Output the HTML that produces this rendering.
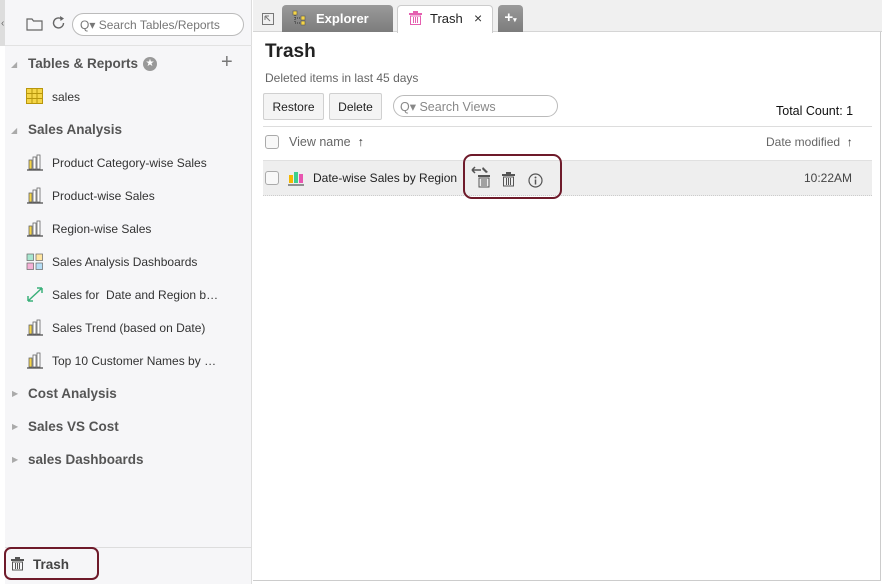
<!DOCTYPE html>
<html><head><meta charset="utf-8"><style>
*{box-sizing:border-box;margin:0;padding:0}
body{width:882px;height:584px;background:#fff;font-family:"Liberation Sans",Arial,sans-serif;position:relative;overflow:hidden;color:#333}
.a{position:absolute}
.side{left:5px;top:0;width:247px;height:584px;background:#f6f6f8;border-right:1px solid #ddd}
.t{font-size:12px;color:#333;white-space:nowrap}
.h{font-size:13.5px;font-weight:bold;color:#555;white-space:nowrap}
</style></head><body>
<div class="a" style="left:0;top:0;width:5px;height:46px;background:#ddd"></div>
<div class="a" style="left:1px;top:18px;font-size:10px;color:#666">‹</div>
<div class="a side"></div>
<div class="a" style="left:5px;top:45px;width:247px;height:1px;background:#e2e2e2"></div>
<svg class="a" style="left:26px;top:16px" width="18" height="16"><path d="M1 3h5l1.5 2H16v9H1z" fill="none" stroke="#666" stroke-width="1.2"/></svg>
<svg class="a" style="left:51px;top:15px" width="16" height="16"><path d="M12.5 8A5 5 0 1 1 10 3.6" fill="none" stroke="#666" stroke-width="1.4"/><path d="M9 1l4 2.5-3.5 2.5z" fill="#666"/></svg>
<div class="a" style="left:72px;top:13px;width:172px;height:23px;border:1px solid #bbb;border-radius:12px;background:#fff"></div>
<div class="a t" style="left:80px;top:18px;color:#777;font-size:12px">Q▾ Search Tables/Reports</div>
<div class="a" style="left:11px;top:60px;font-size:8px;color:#aaa">◢</div>
<div class="a h" style="left:28px;top:56px">Tables &amp; Reports</div>
<div class="a" style="left:143px;top:57px;width:14px;height:14px;border-radius:50%;background:#999;color:#fff;font-size:10px;line-height:14px;text-align:center">★</div>
<div class="a" style="left:221px;top:51px;font-size:20px;color:#777">+</div>
<svg class="a" style="left:26px;top:88px" width="17" height="16"><rect x=".5" y=".5" width="16" height="15" fill="#f5d547" stroke="#b8960c"/><path d="M6 0v16M11 0v16M0 5.5h17M0 10.5h17" stroke="#b8960c"/></svg>
<div class="a t" style="left:52px;top:90px">sales</div>
<div class="a" style="left:11px;top:126px;font-size:8px;color:#aaa">◢</div>
<div class="a h" style="left:28px;top:122px">Sales Analysis</div>
<svg width="0" height="0" style="position:absolute"><defs><g id="bar"><rect x="3" y="6" width="3" height="9" fill="#f5d547" stroke="#666" stroke-width=".8"/><rect x="7" y="3" width="3" height="12" fill="#fff" stroke="#666" stroke-width=".8"/><rect x="11" y="1" width="3" height="14" fill="#fff" stroke="#666" stroke-width=".8"/><path d="M1 16h16" stroke="#444" stroke-width="1.2"/></g></defs></svg>
<svg class="a" style="left:26px;top:154px" width="18" height="17"><use href="#bar"/></svg>
<div class="a t" style="left:52px;top:156px">Product Category-wise Sales</div>
<svg class="a" style="left:26px;top:187px" width="18" height="17"><use href="#bar"/></svg>
<div class="a t" style="left:52px;top:189px">Product-wise Sales</div>
<svg class="a" style="left:26px;top:220px" width="18" height="17"><use href="#bar"/></svg>
<div class="a t" style="left:52px;top:222px">Region-wise Sales</div>
<svg class="a" style="left:26px;top:253px" width="18" height="17"><rect x="1" y="1" width="6.5" height="6.5" fill="#a8e6cf" stroke="#666" stroke-width=".7"/><rect x="10" y="1" width="6.5" height="6.5" fill="#ffe5a0" stroke="#666" stroke-width=".7"/><rect x="1" y="10" width="6.5" height="6.5" fill="#f4b0d6" stroke="#666" stroke-width=".7"/><rect x="10" y="10" width="6.5" height="6.5" fill="#b5ddf5" stroke="#666" stroke-width=".7"/></svg>
<div class="a t" style="left:52px;top:255px">Sales Analysis Dashboards</div>
<svg class="a" style="left:26px;top:286px" width="18" height="17"><path d="M2 15L16 2M2 15v-5M2 15h5M16 2h-5M16 2v5" stroke="#3bb07a" stroke-width="1.5" fill="none"/></svg>
<div class="a t" style="left:52px;top:288px">Sales for &nbsp;Date and Region b…</div>
<svg class="a" style="left:26px;top:319px" width="18" height="17"><use href="#bar"/></svg>
<div class="a t" style="left:52px;top:321px">Sales Trend (based on Date)</div>
<svg class="a" style="left:26px;top:352px" width="18" height="17"><use href="#bar"/></svg>
<div class="a t" style="left:52px;top:354px">Top 10 Customer Names by …</div>
<div class="a" style="left:12px;top:389px;font-size:8px;color:#aaa">▶</div>
<div class="a h" style="left:28px;top:386px">Cost Analysis</div>
<div class="a" style="left:12px;top:422px;font-size:8px;color:#aaa">▶</div>
<div class="a h" style="left:28px;top:419px">Sales VS Cost</div>
<div class="a" style="left:12px;top:455px;font-size:8px;color:#aaa">▶</div>
<div class="a h" style="left:28px;top:452px">sales Dashboards</div>
<div class="a" style="left:5px;top:547px;width:247px;height:1px;background:#ddd"></div>
<div class="a" style="left:4px;top:547px;width:95px;height:33px;border:2px solid #6e1a2a;border-radius:7px"></div>
<svg class="a" style="left:11px;top:557px" width="13" height="14"><rect x="4" y="0" width="5" height="2" fill="#555"/><rect x="0" y="2" width="13" height="2" fill="#555"/><path d="M1.5 5h10v8h-10z M4.5 6v6M6.5 6v6M8.5 6v6" fill="none" stroke="#555"/></svg>
<div class="a h" style="left:33px;top:557px;color:#444">Trash</div>
<div class="a" style="left:253px;top:0;width:629px;height:32px;background:#f0f0f0;border-bottom:1px solid #d5d5d5"></div>
<svg class="a" style="left:262px;top:13px" width="12" height="12"><rect x=".5" y=".5" width="11" height="11" fill="none" stroke="#777"/><path d="M3 3l5 5M3 3v4M3 3h4" stroke="#777" fill="none"/></svg>
<div class="a" style="left:282px;top:5px;width:111px;height:27px;background:linear-gradient(#9a9a9a,#7c7c7c);border-radius:4px 4px 0 0"></div>
<svg class="a" style="left:292px;top:10px" width="16" height="16"><rect x="1" y="1" width="4" height="4" fill="#f5d547" stroke="#555" stroke-width=".6"/><rect x="9" y="6" width="4" height="4" fill="#f5d547" stroke="#555" stroke-width=".6"/><rect x="9" y="11" width="4" height="4" fill="#f5d547" stroke="#555" stroke-width=".6"/><path d="M3 5v8h6M3 8h6" stroke="#333" fill="none" stroke-dasharray="1 1"/></svg>
<div class="a" style="left:316px;top:11px;font-size:13px;font-weight:bold;color:#fff">Explorer</div>
<div class="a" style="left:397px;top:5px;width:96px;height:28px;background:#fff;border:1px solid #ccc;border-bottom:none;border-radius:4px 4px 0 0"></div>
<svg class="a" style="left:409px;top:11px" width="13" height="14"><rect x="4" y="0" width="5" height="2" fill="#e55fb0"/><rect x="0" y="2" width="13" height="2" fill="#e55fb0"/><path d="M1.5 5h10v8.5h-10z M4.5 6v6M6.5 6v6M8.5 6v6" fill="none" stroke="#e55fb0"/></svg>
<div class="a" style="left:430px;top:11px;font-size:13px;color:#222">Trash</div>
<div class="a" style="left:474px;top:10px;font-size:14px;color:#333">×</div>
<div class="a" style="left:498px;top:5px;width:25px;height:27px;background:linear-gradient(#9a9a9a,#7c7c7c);border-radius:4px 4px 0 0;color:#fff;font-weight:bold;font-size:15px;text-align:center;line-height:26px">+<span style="font-size:7px">▾</span></div>
<div class="a" style="left:880px;top:32px;width:1px;height:549px;background:#ccc"></div>
<div class="a" style="left:253px;top:580px;width:628px;height:1px;background:#ccc"></div>
<div class="a" style="left:265px;top:41px;font-size:19px;font-weight:bold;color:#222">Trash</div>
<div class="a t" style="left:265px;top:71px;color:#666">Deleted items in last 45 days</div>
<div class="a" style="left:263px;top:93px;width:61px;height:27px;border:1px solid #d0d0d0;border-radius:2px;background:#f4f4f4;font-size:12px;text-align:center;line-height:26px;color:#222">Restore</div>
<div class="a" style="left:329px;top:93px;width:53px;height:27px;border:1px solid #d0d0d0;border-radius:2px;background:#f4f4f4;font-size:12px;text-align:center;line-height:26px;color:#222">Delete</div>
<div class="a" style="left:393px;top:95px;width:165px;height:22px;border:1px solid #bbb;border-radius:11px;background:#fff"></div>
<div class="a t" style="left:400px;top:99px;color:#888;font-size:12.5px">Q▾ Search Views</div>
<div class="a" style="left:776px;top:104px;font-size:12.5px;color:#111">Total Count: 1</div>
<div class="a" style="left:263px;top:126px;width:609px;height:1px;background:#ddd"></div>
<div class="a" style="left:265px;top:135px;width:14px;height:14px;border:1px solid #aaa;border-radius:3px;background:#f8f8f8"></div>
<div class="a t" style="left:289px;top:135px;color:#666;font-size:12.5px">View name &nbsp;<b style="color:#333">↑</b></div>
<div class="a t" style="left:766px;top:135px;color:#666">Date modified &nbsp;<b style="color:#333">↑</b></div>
<div class="a" style="left:263px;top:160px;width:609px;height:36px;background:#eeeeee;border-top:1px solid #e0e0e0;border-bottom:1px dotted #ccc"></div>
<div class="a" style="left:265px;top:171px;width:14px;height:14px;border:1px solid #aaa;border-radius:3px;background:#f8f8f8"></div>
<svg class="a" style="left:287px;top:169px" width="18" height="17"><rect x="2" y="6" width="4" height="8" fill="#f5b800"/><rect x="7" y="3" width="4" height="11" fill="#3ecf8e"/><rect x="12" y="5" width="4" height="9" fill="#e855b0"/><path d="M1 16h16" stroke="#333"/></svg>
<div class="a" style="left:313px;top:171px;font-size:12px;color:#222">Date-wise Sales by Region</div>
<div class="a" style="left:463px;top:154px;width:99px;height:45px;border:2px solid #6e1a2a;border-radius:9px"></div>
<svg class="a" style="left:471px;top:166px" width="20" height="22"><path d="M1 4h9M1 4l3-3M1 4l3 3" stroke="#555" stroke-width="1.5" fill="none"/><path d="M12 1l5 5-2 1-4-4z" fill="#555"/><rect x="7" y="9" width="12" height="2" fill="#555"/><path d="M8 12h10v9h-10zM11 13v7M13 13v7M15 13v7" fill="none" stroke="#555"/></svg>
<svg class="a" style="left:502px;top:172px" width="13" height="15"><rect x="4" y="0" width="5" height="2" fill="#555"/><rect x="0" y="2" width="13" height="2" fill="#555"/><path d="M1.5 5h10v9h-10z M4.5 6v7M6.5 6v7M8.5 6v7" fill="none" stroke="#555"/></svg>
<svg class="a" style="left:528px;top:173px" width="15" height="15"><circle cx="7.5" cy="7.5" r="6.5" fill="none" stroke="#555" stroke-width="1.2"/><circle cx="7.5" cy="4.5" r="1" fill="#555"/><path d="M7.5 6.5v5" stroke="#555" stroke-width="1.5"/></svg>
<div class="a t" style="left:804px;top:171px;color:#444">10:22AM</div>
</body></html>
